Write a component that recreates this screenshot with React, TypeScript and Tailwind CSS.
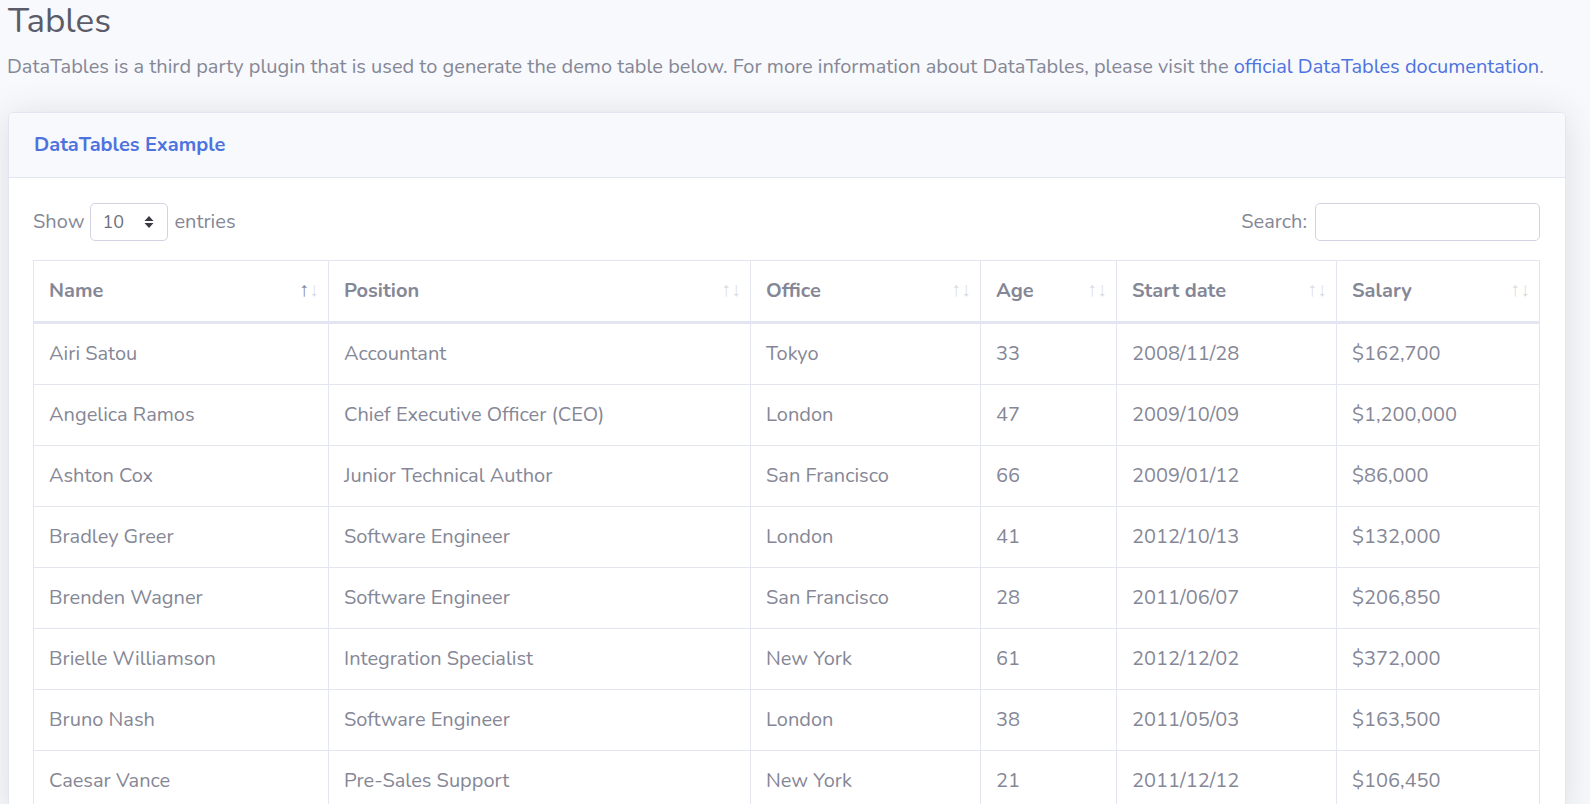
import React from 'react';

const columns = [
  { label: 'Name', width: 'w-[295px]', active: true },
  { label: 'Position', width: 'w-[422px]' },
  { label: 'Office', width: 'w-[230px]' },
  { label: 'Age', width: 'w-[136px]' },
  { label: 'Start date', width: 'w-[220px]' },
  { label: 'Salary', width: 'w-[203px]' },
];

const rows = [
  ['Airi Satou', 'Accountant', 'Tokyo', '33', '2008/11/28', '$162,700'],
  ['Angelica Ramos', 'Chief Executive Officer (CEO)', 'London', '47', '2009/10/09', '$1,200,000'],
  ['Ashton Cox', 'Junior Technical Author', 'San Francisco', '66', '2009/01/12', '$86,000'],
  ['Bradley Greer', 'Software Engineer', 'London', '41', '2012/10/13', '$132,000'],
  ['Brenden Wagner', 'Software Engineer', 'San Francisco', '28', '2011/06/07', '$206,850'],
  ['Brielle Williamson', 'Integration Specialist', 'New York', '61', '2012/12/02', '$372,000'],
  ['Bruno Nash', 'Software Engineer', 'London', '38', '2011/05/03', '$163,500'],
  ['Caesar Vance', 'Pre-Sales Support', 'New York', '21', '2011/12/12', '$106,450'],
];

export default function App() {
  return (
    <div className="min-h-screen bg-[#f8f9fc] pl-[8px] pr-[24px] font-['Nunito','Open_Sans',sans-serif] text-[20px] text-[#858796]">
      <h1 className="pt-[1px] text-[35px] leading-[40px] text-[#5a5c69]">Tables</h1>
      <p className="-ml-[1px] mt-[11px] leading-[30px]">
        DataTables is a third party plugin that is used to generate the demo table below. For more information about DataTables, please visit the{' '}
        <a className="text-[#4e73df]">official DataTables documentation</a>.
      </p>

      {/* Card */}
      <div className="mt-[30px] overflow-hidden rounded-[5px] border border-[#e3e6f0] bg-white shadow-[0_3px_35px_0_rgba(58,59,69,0.15)]">
        <div className="flex h-[65px] items-center border-b border-[#e3e6f0] bg-[#f8f9fc] px-[25px]">
          <h6 className="font-bold text-[#4e73df]">DataTables Example</h6>
        </div>

        <div className="pl-[24px] pr-[25px] pt-[25px]">
          {/* Controls */}
          <div className="flex items-center justify-between">
            <div className="flex items-center">
              <span>Show</span>
              <div className="mx-[6px] flex h-[38px] w-[78px] items-center justify-between rounded-[5px] border border-[#d1d3e2] pl-[11px] pr-[13px] text-[#6e707e]">
                <span className="text-[18px]">10</span>
                <svg width="10" height="14" viewBox="0 0 10 14">
                  <path d="M5 1 L9.5 6 H0.5 Z M5 13 L9.5 8 H0.5 Z" fill="#3a3b45" />
                </svg>
              </div>
              <span>entries</span>
            </div>
            <div className="flex items-center">
              <span>Search:</span>
              <div className="ml-[8px] h-[38px] w-[225px] rounded-[5px] border border-[#d1d3e2] bg-white" />
            </div>
          </div>

          {/* Table */}
          <table className="mt-[19px] w-full table-fixed border-collapse border border-[#e3e6f0]">
            <thead>
              <tr>
                {columns.map((c) => (
                  <th
                    key={c.label}
                    className={`relative ${c.width} border border-b-[3px] border-[#e3e6f0] px-[15px] py-[15px] text-left font-bold leading-[30px]`}
                  >
                    {c.label}
                    <span className={`absolute right-[19px] top-[19px] text-[20px] font-normal leading-[20px] ${c.active ? 'text-[#858796]' : 'text-[#858796]/30'}`}>↑</span>
                    <span className="absolute right-[9px] top-[19px] text-[20px] font-normal leading-[20px] text-[#858796]/30">↓</span>
                  </th>
                ))}
              </tr>
            </thead>
            <tbody>
              {rows.map((r) => (
                <tr key={r[0]}>
                  {r.map((cell, i) => (
                    <td key={i} className="border border-[#e3e6f0] px-[15px] py-[15px] leading-[30px]">
                      {cell}
                    </td>
                  ))}
                </tr>
              ))}
            </tbody>
          </table>
        </div>
      </div>
    </div>
  );
}
